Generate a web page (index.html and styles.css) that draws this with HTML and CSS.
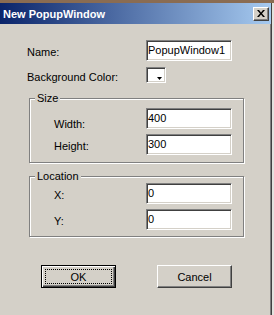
FILE: index.html
```html
<!DOCTYPE html>
<html lang="en">
<head>
<meta charset="UTF-8">
<title>New PopupWindow</title>
<link rel="stylesheet" href="styles.css">
</head>
<body>
    <div class="window">
        <div class="titlebar">
            <span class="title">New PopupWindow</span>
            <div class="closebtn">
                <svg width="8" height="7" viewBox="0 0 8 7">
                    <path d="M0 0h2l2 2.5L6 0h2L5 3.5 8 7H6L4 4.5 2 7H0l3-3.5z" fill="#000"/>
                </svg>
            </div>
        </div>
        <div class="body">
            <div class="row">
                <label class="lbl">Name:</label>
                <input class="field" type="text" value="PopupWindow1">
            </div>
            <div class="row row-color">
                <label class="lbl">Background Color:</label>
                <div class="colorbox">
                    <svg class="arrow" width="5" height="3" viewBox="0 0 5 3"><path d="M0 0h5L2.5 3z" fill="#000"/></svg>
                </div>
            </div>

            <div class="group group-size">
                <div class="group-title">Size</div>
                <div class="row grow first">
                    <label class="lbl lbl-low">Width:</label>
                    <input class="field" type="text" value="400">
                </div>
                <div class="row grow">
                    <label class="lbl">Height:</label>
                    <input class="field" type="text" value="300">
                </div>
            </div>

            <div class="group group-loc">
                <div class="group-title">Location</div>
                <div class="row grow">
                    <label class="lbl">X:</label>
                    <input class="field" type="text" value="0">
                </div>
                <div class="row grow">
                    <label class="lbl">Y:</label>
                    <input class="field" type="text" value="0">
                </div>
            </div>

            <div class="buttons">
                <button class="btn btn-default">OK</button>
                <button class="btn">Cancel</button>
            </div>
        </div>
    </div>
</body>
</html>
```

FILE: styles.css
```css
html, body {
    margin: 0;
    padding: 0;
}
body {
    background: #e4e2de;
    border-top: 3px solid #8a6c52;
    font-family: "Liberation Sans", Arial, sans-serif;
    font-size: 11px;
    color: #000;
}

.window {
    width: 271px;
    height: 312px;
    background: #d4d0c8;
    border-right: 1px solid #404040;
    box-shadow: inset -1px 0 0 #808080;
    box-sizing: content-box;
}

.titlebar {
    height: 21px;
    display: flex;
    align-items: center;
    justify-content: space-between;
    padding-left: 3px;
    background: linear-gradient(to right, #0a246a, #a6caf0);
}
.title {
    color: #fff;
    font-weight: bold;
    font-size: 11px;
}
.closebtn {
    width: 16px;
    height: 14px;
    box-sizing: border-box;
    margin-right: 2px;
    background: #d4d0c8;
    border: 1px solid;
    border-color: #fff #404040 #404040 #fff;
    box-shadow: inset -1px -1px 0 #808080;
    display: flex;
    align-items: center;
    justify-content: center;
}

.body {
    padding: 16px 0 0 27px;
}

.row {
    display: flex;
    align-items: center;
    height: 21px;
}
.lbl {
    width: 119px;
    padding-top: 3px;
}
.lbl-low {
    padding-top: 11px;
}
.row-color {
    margin-top: 6px;
    height: 16px;
}

.field {
    width: 86px;
    height: 21px;
    box-sizing: border-box;
    margin: 0;
    padding: 0 0 1px 1px;
    border: 1px solid;
    border-color: #808080 #fff #fff #808080;
    box-shadow: inset 1px 1px 0 #404040, inset -1px -1px 0 #d4d0c8;
    background: #fff;
    font-family: "Liberation Sans", Arial, sans-serif;
    font-size: 11px;
    color: #000;
    outline: none;
}

.colorbox {
    width: 20px;
    height: 16px;
    box-sizing: border-box;
    border: 1px solid;
    border-color: #808080 #fff #fff #808080;
    box-shadow: inset 1px 1px 0 #404040, inset -1px -1px 0 #d4d0c8;
    background: #fff;
    display: flex;
    align-items: flex-end;
    justify-content: flex-end;
    padding: 0 3px 2px 0;
}

.group {
    width: 215px;
    margin-left: 2px;
    box-sizing: border-box;
    border: 1px solid #808080;
    box-shadow: 1px 1px 0 #fff, inset 1px 1px 0 #fff;
}
.group-size {
    margin-top: 15px;
    padding-bottom: 7px;
}
.group-loc {
    margin-top: 13px;
    padding-bottom: 6px;
}
.group-title {
    width: max-content;
    margin: -7px 0 0 5px;
    padding: 0 2px;
    line-height: 13px;
    background: #d4d0c8;
}
.grow {
    padding-left: 24px;
    margin-top: 5px;
}
.grow .lbl {
    width: 92px;
}
.group-size .first {
    margin-top: 3px;
}
.group-loc .grow:nth-child(2) {
    margin-top: 0;
}

.buttons {
    display: flex;
    gap: 41px;
    margin: 28px 0 0 14px;
}
.btn {
    width: 75px;
    height: 23px;
    box-sizing: border-box;
    margin: 0;
    padding: 0;
    background: #d4d0c8;
    border: 1px solid;
    border-color: #fff #404040 #404040 #fff;
    box-shadow: inset -1px -1px 0 #808080;
    font-family: "Liberation Sans", Arial, sans-serif;
    font-size: 11px;
    color: #000;
}
.btn-default {
    border: 1px solid #000;
    box-shadow: inset 1px 1px 0 #fff, inset -1px -1px 0 #404040, inset -2px -2px 0 #808080;
    outline: 1px dotted #000;
    outline-offset: -5px;
}
```
